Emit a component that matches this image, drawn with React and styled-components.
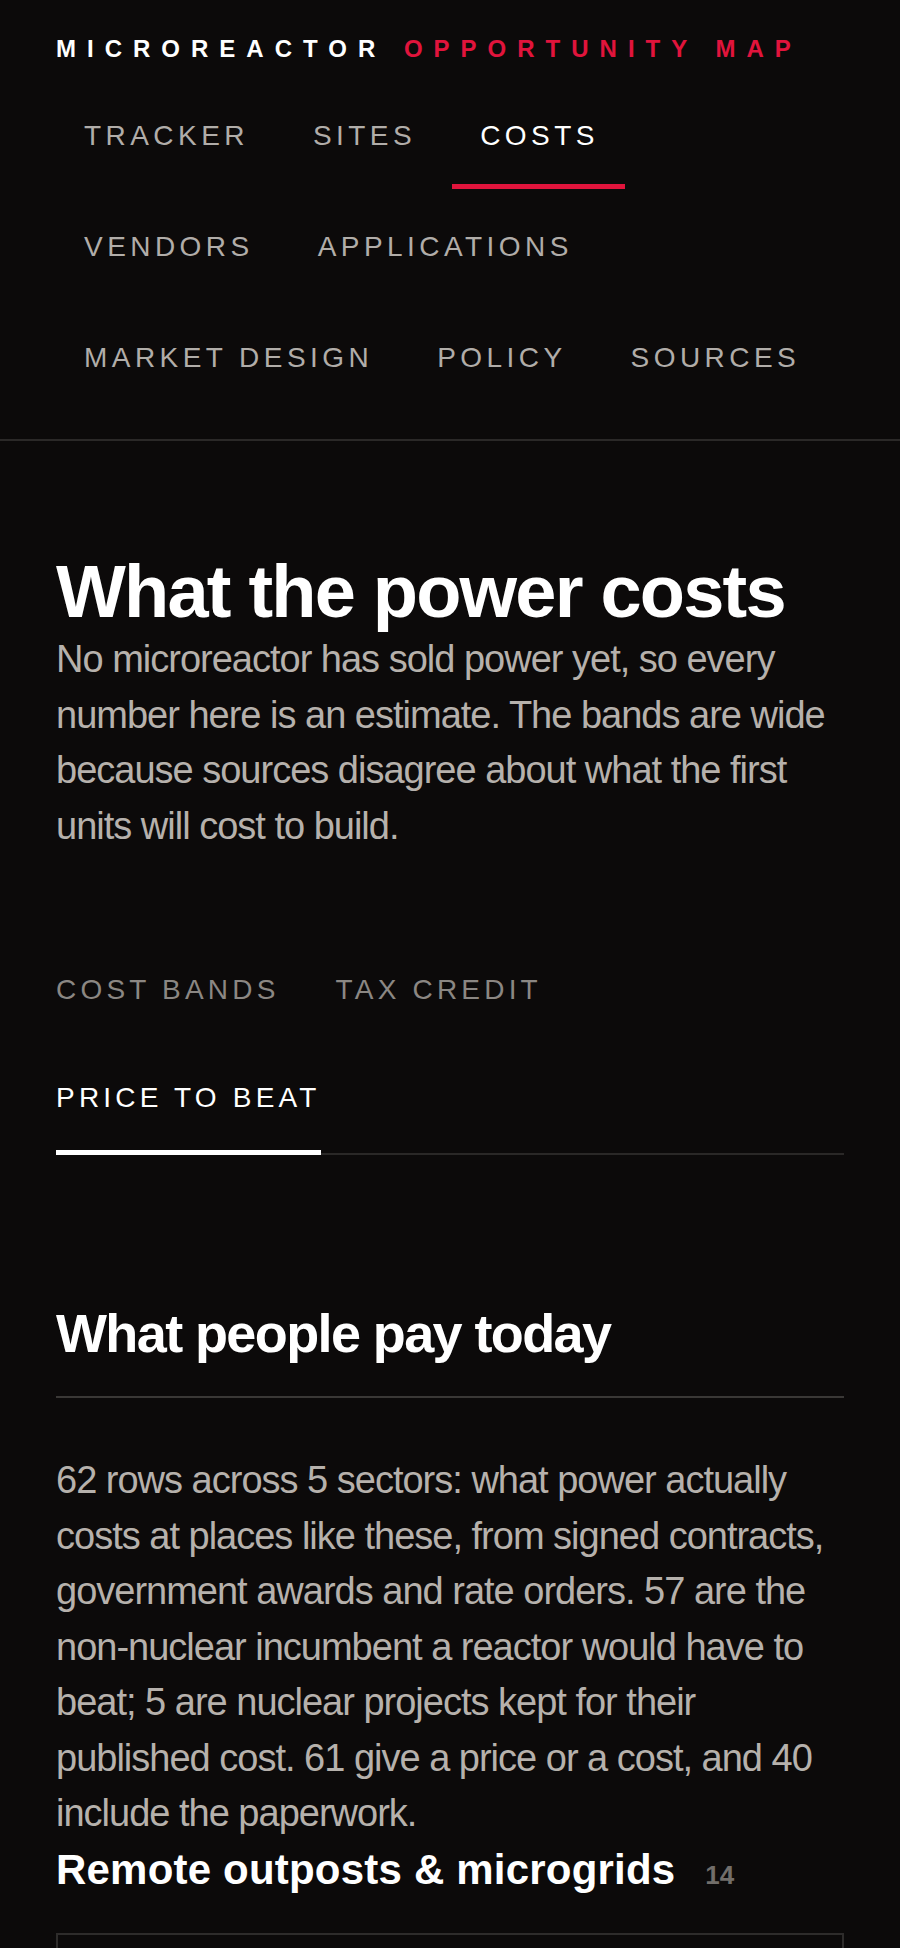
import React from "react";
import styled, { createGlobalStyle } from "styled-components";

const GlobalStyle = createGlobalStyle`
  * {
    box-sizing: border-box;
  }

  html,
  body {
    margin: 0;
    padding: 0;
    background: #0c0a0a;
  }

  body {
    font-family: "Liberation Sans", Arial, sans-serif;
    color: #f5f3f0;
    -webkit-font-smoothing: antialiased;
  }
`;

const NAV = [
  "Tracker",
  "Sites",
  "Costs",
  "Vendors",
  "Applications",
  "Market design",
  "Policy",
  "Sources",
];

const TABS = ["Cost bands", "Tax credit", "Price to beat"];

const App = () => {
  return (
    <>
      <GlobalStyle />

      <Page>
        <Header>
          <Brand>
            Microreactor <span>Opportunity Map</span>
          </Brand>

          <Nav>
            {NAV.map((item) => (
              <NavItem key={item} href="#" $active={item === "Costs"}>
                {item}
              </NavItem>
            ))}
          </Nav>
        </Header>

        <Main>
          <Title>What the power costs</Title>
          <Lede>
            No microreactor has sold power yet, so every number here is an
            estimate. The bands are wide because sources disagree about what
            the first units will cost to build.
          </Lede>

          <TabList role="tablist">
            {TABS.map((tab) => (
              <Tab key={tab} role="tab" $active={tab === "Price to beat"}>
                {tab}
              </Tab>
            ))}
          </TabList>

          <Section>
            <SectionTitle>What people pay today</SectionTitle>
            <Body>
              62 rows across 5 sectors: what power actually costs at places
              like these, from signed contracts, government awards and rate
              orders. 57 are the non-nuclear incumbent a reactor would have to
              beat; 5 are nuclear projects kept for their published cost. 61
              give a price or a cost, and 40 include the paperwork.
            </Body>

            <GroupTitle>
              Remote outposts &amp; microgrids
              <Count>14</Count>
            </GroupTitle>

            <Card />
          </Section>
        </Main>
      </Page>
    </>
  );
};

const Page = styled.div`
  min-height: 1948px;
  background: #0c0a0a;
  overflow: hidden;
`;

const Header = styled.header`
  padding: 31px 56px 28px;
  border-bottom: 2px solid #2b2928;
`;

const Brand = styled.div`
  font-size: 24px;
  line-height: 36px;
  font-weight: 700;
  letter-spacing: 11px;
  text-transform: uppercase;
  white-space: nowrap;
  color: #ffffff;

  span {
    color: #e1143c;
  }
`;

const Nav = styled.nav`
  display: flex;
  flex-wrap: wrap;
  column-gap: 10px;
  max-width: 780px;
  margin-top: 11px;
`;

const NavItem = styled.a`
  display: block;
  padding: 44px 26px 34px 28px;
  font-size: 28px;
  line-height: 28px;
  letter-spacing: 4.45px;
  text-transform: uppercase;
  text-decoration: none;
  color: ${(p) => (p.$active ? "#ffffff" : "#b1ada9")};
  border-bottom: 5px solid ${(p) => (p.$active ? "#e1143c" : "transparent")};
`;

const Main = styled.main`
  padding: 114px 56px 0;
`;

const Title = styled.h1`
  margin: 0;
  font-size: 74px;
  line-height: 74px;
  font-weight: 700;
  letter-spacing: -1.8px;
  color: #ffffff;
`;

const Lede = styled.p`
  margin: 3px 0 0;
  font-size: 38px;
  line-height: 55.5px;
  letter-spacing: -1px;
  color: #b6b1ac;
`;

const TabList = styled.div`
  display: flex;
  flex-wrap: wrap;
  column-gap: 56px;
  margin-top: 85px;
  box-shadow: inset 0 -2px 0 #2a2827;
`;

const Tab = styled.button`
  padding: 37px 0 38px;
  background: none;
  border: 0;
  border-bottom: 5px solid ${(p) => (p.$active ? "#ffffff" : "transparent")};
  font-family: inherit;
  font-size: 28px;
  line-height: 28px;
  letter-spacing: 4.2px;
  text-transform: uppercase;
  text-align: left;
  color: ${(p) => (p.$active ? "#ffffff" : "#8b8783")};
  cursor: pointer;
`;

const Section = styled.section`
  margin-top: 149px;
`;

const SectionTitle = styled.h2`
  margin: 0;
  padding-bottom: 33px;
  border-bottom: 2px solid #3a3836;
  font-size: 54px;
  line-height: 59px;
  font-weight: 700;
  letter-spacing: -1.6px;
  color: #ffffff;
`;

const Body = styled.p`
  margin: 55px 0 0;
  font-size: 38px;
  line-height: 55.5px;
  letter-spacing: -1px;
  color: #b6b1ac;
`;

const GroupTitle = styled.h3`
  margin: 3px 0 0;
  font-size: 42px;
  line-height: 50px;
  font-weight: 700;
  letter-spacing: 0.2px;
  color: #ffffff;
`;

const Count = styled.span`
  margin-left: 30px;
  font-size: 26px;
  font-weight: 700;
  letter-spacing: 0;
  color: #726e6a;
`;

const Card = styled.div`
  margin-top: 33px;
  min-height: 320px;
  border: 2px solid #2e2c2b;
`;

export default App;
